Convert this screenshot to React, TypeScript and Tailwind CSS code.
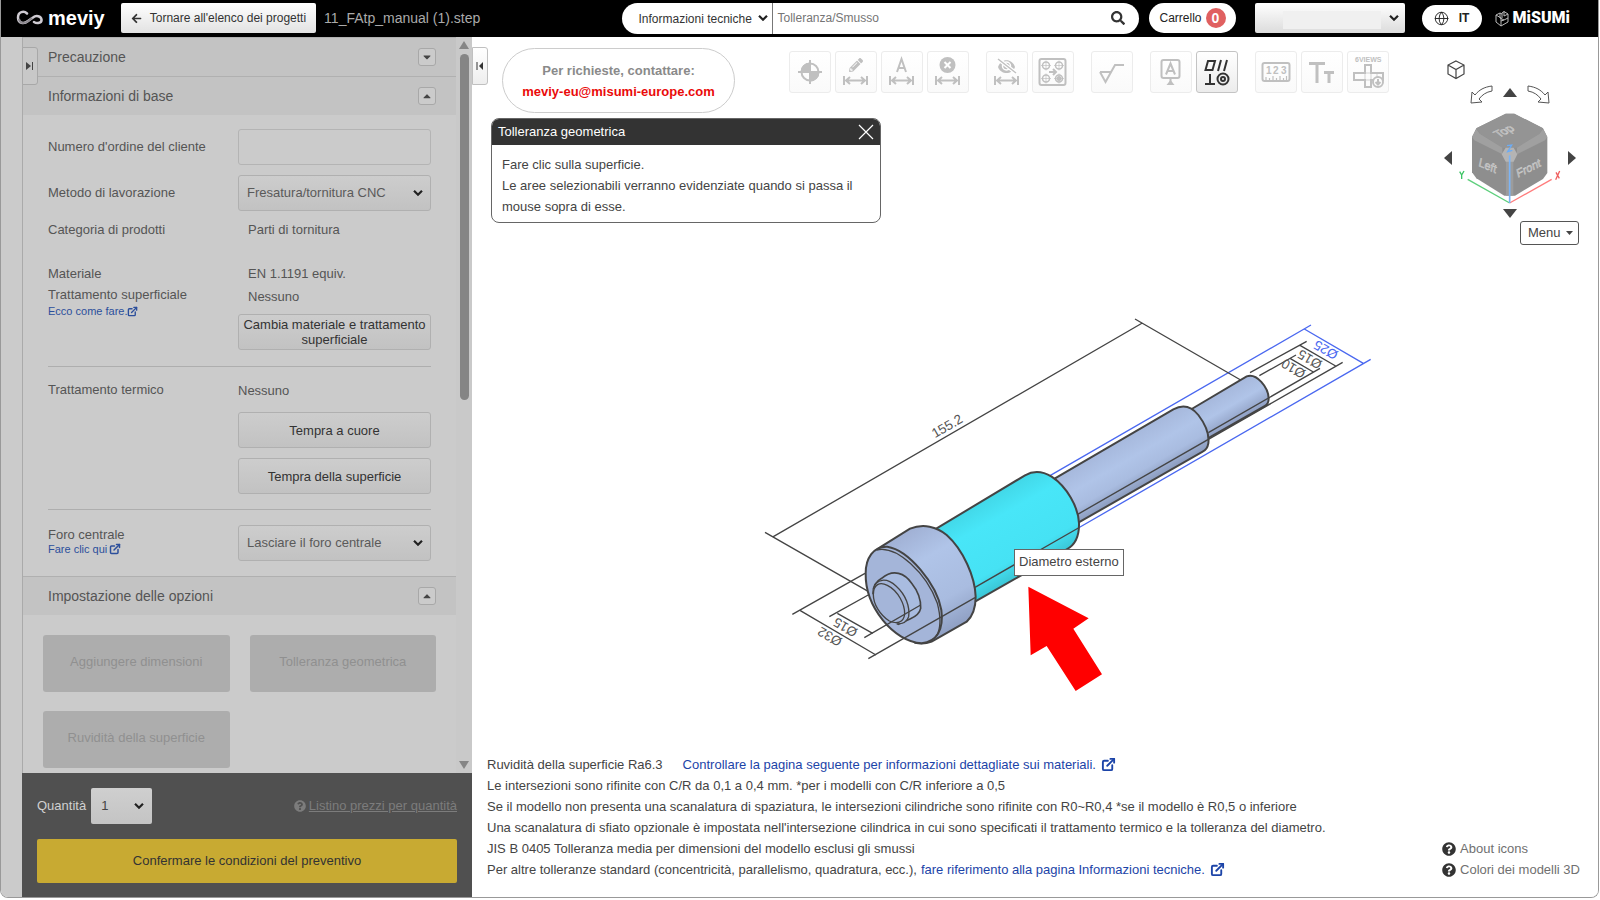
import React from "react";
import clsx from "clsx";
import { FaArrowLeft, FaSearch, FaQuestionCircle, FaCaretDown, FaCaretUp, FaPencilAlt } from "react-icons/fa";
import { Globe, ExternalLink } from "lucide-react";

const greyButton =
  "w-full h-9 rounded-[3px] border border-[#b0b0b0] bg-linear-to-b from-[#cdcdcd] to-[#c2c2c2] text-[13px] leading-[15px] text-[#333]";
const greySelect =
  "h-9 rounded-[3px] border border-[#b0b0b0] bg-linear-to-b from-[#cdcdcd] to-[#c2c2c2] pl-2 text-[13px] text-[#5a5a5a]";

type SelectProps = {
  id?: string;
  label?: string;
  value: string;
  className: string;
  wrapper?: string;
  arrow?: string;
};

const Select = ({ id, label, value, className, wrapper = "w-full", arrow = "right-2" }: SelectProps) => (
  <div className={clsx("relative", wrapper)}>
    <select id={id} aria-label={label} className={clsx("w-full appearance-none", className)}>
      <option>{value}</option>
    </select>
    <svg
      width="10"
      height="7"
      viewBox="0 0 10 7"
      fill="none"
      stroke="#222"
      strokeWidth="2.200"
      className={clsx("pointer-events-none absolute top-1/2 -translate-y-1/2", arrow)}
    >
      <path d="M1 1.200L5 5.200L9 1.200" />
    </svg>
  </div>
);

const MeviyLogo = () => (
  <a href="#" className="flex items-center gap-1 text-white" aria-label="meviy">
    <svg width="28" height="16" viewBox="0 0 28 16" fill="none">
      <path
        d="M11 3.500C8 .5 2 1.500 2 7.500C2 13.500 8 14.500 12 11L17 7.500C20 5 25 6 25.500 9.500C26 13 21 14 18 12"
        stroke="#cfcbd2"
        strokeWidth="2.500"
        strokeLinecap="round"
      />
      <path d="M3 9C4 14 9 14 13 10.500L16 8" stroke="#8d8990" strokeWidth="2" />
    </svg>
    <span className="text-xl leading-6 font-bold">meviy</span>
  </a>
);

const MisumiLogo = () => (
  <a href="#" className="flex items-center gap-1 text-white" aria-label="MiSUMi">
    <svg width="14" height="17" viewBox="0 0 14 17" fill="none" stroke="#bbb" strokeWidth="1">
      <path d="M1 5L5 3L5 8L9 10L13 8V4L9 1.500L7 3V8M1 5V12L6 16L13 12V8M1 5L6 8V16M6 11L9 10M9 1.500V6L13 4M5 3L7 4" />
    </svg>
    <span className="font-['Roboto',sans-serif] text-base leading-5 font-black">MiSUMi</span>
  </a>
);

const TopBar = () => (
  <header className="flex h-[37px] items-center bg-black pb-px pl-[15px] pr-[28px]">
    <MeviyLogo />
    <button className="ml-4 flex h-[30px] shrink-0 items-center gap-2 rounded-[2px] bg-linear-to-b from-white to-[#e2e2e2] px-[10px] text-xs text-[#333]">
      <FaArrowLeft size={11} />
      Tornare all'elenco dei progetti
    </button>
    <span className="ml-2 text-sm text-[#aaa]">11_FAtp_manual (1).step</span>

    <form className="ml-auto flex h-[31px] w-[517px] items-center rounded-full bg-white pl-4">
      <Select
        label="Categoria"
        value="Informazioni tecniche"
        wrapper="w-[134px] shrink-0"
        className="bg-white text-xs text-[#333]"
        arrow="right-1"
      />
      <input
        aria-label="Cerca"
        placeholder="Tolleranza/Smusso"
        className="h-full min-w-0 flex-1 border-l border-[#777] pl-1 text-xs text-[#333] outline-none placeholder:text-[#757575]"
      />
      <button type="button" aria-label="Cerca" className="px-[14px] text-[#333]">
        <FaSearch size={14} />
      </button>
    </form>

    <button className="ml-[10px] flex h-[30px] items-center gap-1 rounded-full bg-white px-[10px] text-xs text-[#222]">
      Carrello
      <span className="flex size-5 items-center justify-center rounded-full bg-[#e06060] text-sm font-bold text-white">0</span>
    </button>
    <div className="relative ml-[19px] h-[30px] w-[150px] rounded-[2px] bg-linear-to-b from-white to-[#dcdcdc]">
      <Select label="Account" value="" className="h-[30px]" arrow="right-[6px]" />
      <div className="pointer-events-none absolute top-2 left-7 h-[18px] w-[98px] bg-[#f0f0f0]" />
    </div>
    <button className="ml-[17px] flex h-[27px] w-[60px] items-center justify-center gap-[10px] rounded-full bg-white text-xs font-bold text-[#222]">
      <Globe size={15} strokeWidth={1.5} />
      IT
    </button>
    <div className="ml-[13px]">
      <MisumiLogo />
    </div>
  </header>
);

const SectionHeader = ({ title, open }: { title: string; open: boolean }) => (
  <div className="flex h-[39px] items-center justify-between border-t border-[#b0b0b0] bg-[#c3c3c3] pr-5 pl-[25px]">
    <h2 className="text-sm text-[#555]">{title}</h2>
    <button
      aria-label={title}
      className="flex size-[18px] items-center justify-center rounded-[3px] border border-[#a8a8a8] bg-[#cbcbcb] text-[#444]"
    >
      {open ? <FaCaretUp size={12} /> : <FaCaretDown size={12} />}
    </button>
  </div>
);

const Sidebar = () => (
  <aside className="relative flex w-[450px] shrink-0 flex-col border-l border-[#aaa] text-[13px] text-[#555]">
    <button
      aria-label="Espandi"
      className="absolute top-[10px] -left-px z-10 flex h-[38px] w-4 items-center justify-center rounded-r-[3px] border border-[#a8a8a8] bg-[#c8c8c8]"
    >
      <svg width="8" height="10" viewBox="0 0 8 10">
        <path d="M0 1L5 5L0 9Z" fill="#444" />
        <path d="M6.500 1V9" stroke="#444" />
      </svg>
    </button>

    <div className="flex flex-1">
      <div className="flex-1">
        <SectionHeader title="Precauzione" open={false} />
        <SectionHeader title="Informazioni di base" open />

        <div className="px-[25px] pt-[14px] pb-[15px]">
          <div className="grid grid-cols-[190px_1fr] items-center gap-y-[10px]">
            <label htmlFor="order">Numero d'ordine del cliente</label>
            <input id="order" className="h-9 w-full rounded-[3px] border border-[#b4b4b4] px-2" />
            <label htmlFor="method">Metodo di lavorazione</label>
            <Select id="method" className={greySelect} value="Fresatura/tornitura CNC" />
            <span className="leading-[18px]">Categoria di prodotti</span>
            <span className="pl-[10px] leading-[18px]">Parti di tornitura</span>
          </div>

          <div className="mt-[22px] grid grid-cols-[190px_1fr] border-b border-[#aeaeae] pb-4">
            <div className="pt-[2px] leading-[21px]">
              <p>Materiale</p>
              <p>Trattamento superficiale</p>
              <a href="#" className="flex items-center text-[11px] leading-3 text-[#2c4f9c]">
                Ecco come fare.
                <ExternalLink size={11} strokeWidth={3} />
              </a>
            </div>
            <div>
              <p className="pt-px pl-[10px] leading-[23px]">EN 1.1191 equiv.</p>
              <p className="mb-[6px] pl-[10px] leading-[23px]">Nessuno</p>
              <button className={greyButton}>Cambia materiale e trattamento superficiale</button>
            </div>
          </div>

          <div className="grid grid-cols-[190px_1fr] border-b border-[#aeaeae] pt-[13px] pb-[15px]">
            <p className="leading-5">Trattamento termico</p>
            <div>
              <p className="mb-[11px] pt-px leading-5">Nessuno</p>
              <button className={greyButton}>Tempra a cuore</button>
              <button className={greyButton + " mt-[10px]"}>Tempra della superficie</button>
            </div>
          </div>

          <div className="grid grid-cols-[190px_1fr] pt-[15px]">
            <div className="pt-[2px] leading-[15px]">
              <label htmlFor="hole">Foro centrale</label>
              <a href="#" className="flex items-center gap-[2px] text-[11px] leading-[14px] text-[#2c4f9c]">
                Fare clic qui
                <ExternalLink size={12} strokeWidth={3} />
              </a>
            </div>
            <Select id="hole" className={greySelect} value="Lasciare il foro centrale" />
          </div>
        </div>

        <SectionHeader title="Impostazione delle opzioni" open />
        <div className="grid grid-cols-2 gap-x-5 gap-y-[19px] px-5 pt-5 pb-[3px]">
          {["Aggiungere dimensioni", "Tolleranza geometrica", "Ruvidità della superficie"].map((name) => (
            <button key={name} disabled className="h-[57px] rounded-[3px] bg-[#adadad] pb-1 text-[#909090]">
              {name}
            </button>
          ))}
        </div>
      </div>

      {/* scrollbar */}
      <div className="flex w-4 flex-col items-center justify-between bg-[#c9c9c9] py-1">
        <div className="flex flex-col items-center gap-[5px]">
          <svg width="10" height="8" viewBox="0 0 10 8">
            <path d="M5 0L10 8H0Z" fill="#858585" />
          </svg>
          <div className="h-[346px] w-[9px] rounded-full bg-[#858585]" />
        </div>
        <svg width="10" height="8" viewBox="0 0 10 8">
          <path d="M0 0H10L5 8Z" fill="#858585" />
        </svg>
      </div>
    </div>

    <div className="-ml-px bg-[#505050] px-[15px] pt-[15px] pb-[14px]">
      <div className="flex items-center">
        <label htmlFor="qty" className="text-[#d0d0d0]">
          Quantità
        </label>
        <Select
          id="qty"
          value="1"
          wrapper="ml-[5px] w-[61px]"
          className="h-9 rounded-[2px] bg-linear-to-b from-[#cfcfcf] to-[#c4c4c4] pl-[10px] text-[13px] text-[#444]"
        />
        <a href="#" className="ml-auto flex items-center gap-[3px] text-[#7c7c7c]">
          <FaQuestionCircle size={12} />
          <span className="underline">Listino prezzi per quantità</span>
        </a>
      </div>
      <button className="mt-[15px] h-11 w-full rounded-[2px] bg-[#c8aa32] text-[#333]">
        Confermare le condizioni del preventivo
      </button>
    </div>
  </aside>
);

const DimArrow = () => <path d="M9 25V34M32 25V34M11 29.500H30M15 26L11 29.500L15 33M26 26L30 29.500L26 33" />;

const toolGroups = [
  [
    {
      name: "Origine",
      icon: (
        <>
          <circle cx="21" cy="21" r="8.500" />
          <path d="M21 9V33M9 21H33" />
          <path d="M21 21V12.500A8.500 8.500 0 0 0 12.500 21ZM21 21V29.500A8.500 8.500 0 0 0 29.500 21Z" fill="currentColor" />
        </>
      ),
    },
    {
      name: "Modifica dimensione",
      icon: (
        <>
          <DimArrow />
          <FaPencilAlt x="14" y="7" size={14} stroke="none" />
        </>
      ),
    },
    {
      name: "Testo dimensione",
      icon: (
        <>
          <DimArrow />
          <path d="M16 21L20.500 8L25 21M17.500 17H23.500" />
        </>
      ),
    },
    {
      name: "Elimina dimensione",
      icon: (
        <>
          <DimArrow />
          <circle cx="20.500" cy="14" r="8" fill="currentColor" stroke="none" />
          <path d="M17.500 11L23.500 17M23.500 11L17.500 17" stroke="#fff" />
        </>
      ),
    },
  ],
  [
    {
      name: "Nascondi dimensioni",
      icon: (
        <>
          <DimArrow />
          <path d="M12 16C15 7 26 7 29 16C26 24 15 24 12 16Z" fill="currentColor" stroke="none" />
          <circle cx="20.500" cy="15" r="4" stroke="#fff" strokeWidth="1.500" />
          <path d="M12 8L30 22" stroke="#fff" strokeWidth="4" />
          <path d="M12 8L30 22" strokeWidth="1.500" />
        </>
      ),
    },
    {
      name: "Gruppo fori",
      icon: (
        <>
          <rect x="7.500" y="8" width="26" height="26" rx="2" />
          <circle cx="14" cy="14.500" r="3.500" strokeWidth="1.500" />
          <circle cx="27" cy="14.500" r="3.500" strokeWidth="1.500" />
          <circle cx="14" cy="27.500" r="3.500" strokeWidth="1.500" />
          <circle cx="27" cy="27.500" r="3.500" strokeWidth="1.500" />
          <circle cx="27" cy="27.500" r="1.500" fill="currentColor" />
          <path d="M9 14.500H19M14 9.500V19.500M22 14.500H32M27 9.500V19.500M9 27.500H19M14 22.500V32.500M22 27.500H32M27 22.500V32.500" strokeWidth="0.700" />
          <path d="M17 21H24M21 18L24 21L21 24" />
        </>
      ),
    },
  ],
  [
    {
      name: "Rugosità",
      icon: <path d="M9 21H20L14.500 31L9 21M14.500 31L24 14H33" />,
    },
  ],
  [
    {
      name: "Riferimento",
      icon: (
        <>
          <rect x="11.500" y="9" width="18" height="18" rx="2" />
          <path d="M16 23.500L20.500 12.500L25 23.500M17.500 20H23.500M20.500 27V31" />
          <path d="M20.500 29L24.500 34H16.500Z" fill="currentColor" stroke="none" />
        </>
      ),
    },
    {
      name: "Tolleranza geometrica",
      active: true,
      icon: (
        <>
          <path d="M12 10H19L16.500 19H9.500ZM25 9L22 20M31 9L28 20M9 33H19M14 23V33" />
          <circle cx="27" cy="28" r="5.500" />
          <circle cx="27" cy="28" r="2" />
        </>
      ),
    },
  ],
  [
    {
      name: "Misura",
      icon: (
        <>
          <rect x="7.500" y="12" width="27" height="18" rx="2" />
          <g fontSize="10" fontWeight="bold" fill="currentColor" stroke="none">
            <text x="11" y="23">1</text>
            <text x="18" y="23">2</text>
            <text x="26" y="23">3</text>
          </g>
          <path d="M11 29V26M14.500 29V27M18 29V25M21.500 29V27M25 29V25M28.500 29V27M31.500 29V25" strokeWidth="1.200" />
        </>
      ),
    },
    {
      name: "Dimensione testo",
      icon: <path d="M8 12.500H24M16 12.500V32M23 21.500H33M28 21.500V32" strokeWidth="3" />,
    },
    {
      name: "6 viste",
      icon: (
        <>
          <text x="8" y="11" fontSize="7" fontWeight="bold" fill="currentColor" stroke="none">
            6VIEWS
          </text>
          <path d="M18 14H24V22H36V29H24V36H18V29H7V22H18Z" />
          <path d="M18 22H24V29H18ZM30 22V29" strokeWidth="0.700" />
          <circle cx="31" cy="31" r="5" fill="#fdfdfd" />
          <path d="M31 28V33M28.500 31L31 33.500L33.500 31" />
        </>
      ),
    },
  ],
];

const Toolbar = () => (
  <div className="flex gap-[17px] pt-[3px]">
    {toolGroups.map((group, i) => (
      <div key={i} className="flex gap-1">
        {group.map((tool: any) => (
          <button
            key={tool.name}
            aria-label={tool.name}
            className={
              tool.active
                ? "size-[42px] rounded-[3px] border border-[#c4c4c4] bg-linear-to-b from-white to-[#ececec] text-[#333]"
                : "size-[42px] rounded-[3px] border border-[#ececec] bg-linear-to-b from-white to-[#fafafa] text-[#c0c0c0]"
            }
          >
            <svg width="40" height="40" viewBox="1 1 40 40" fill="none" stroke="currentColor" strokeWidth="2">
              {tool.icon}
            </svg>
          </button>
        ))}
      </div>
    ))}
  </div>
);

const Triangle = ({ d, label }: { d: string; label: string }) => (
  <button aria-label={label}>
    <svg width="14" height="14" viewBox="0 0 14 14" fill="#444">
      <path d={d} />
    </svg>
  </button>
);

const ViewCube = () => (
  <div className="flex w-[138px] flex-col">
    <button aria-label="Isometrica" className="mb-[5px] ml-[6px] self-start">
      <svg width="18" height="20" viewBox="0 0 18 20" fill="none" stroke="#444" strokeWidth="1.200">
        <path d="M9 1L17 5V14L9 18.500L1 14V5ZM1 5L9 9.500L17 5M9 9.500V18.500" />
      </svg>
    </button>
    <div className="flex items-start justify-center gap-[9px]">
      <button aria-label="Ruota a sinistra">
        <svg width="24" height="20" viewBox="0 0 24 20" fill="none" stroke="#555">
          <path d="M22 1C14 2 9 5 5 10L2 7L1 18L12 17L9 14C12 10 16 7 22 6Z" />
        </svg>
      </button>
      <Triangle label="Su" d="M7 3L14 12H0Z" />
      <button aria-label="Ruota a destra">
        <svg width="24" height="20" viewBox="0 0 24 20" fill="none" stroke="#555">
          <path d="M2 1C10 2 15 5 19 10L22 7L23 18L12 17L15 14C12 10 8 7 2 6Z" />
        </svg>
      </button>
    </div>
    <div className="flex items-center justify-between pt-1">
      <Triangle label="Sinistra" d="M3 7L11 0V14Z" />
      {/* cube body and axes, three units per pixel */}
      <svg width="106" height="98" viewBox="166 206 318 294">
        <path d="M312 220H338L424 264L437 290V398L424 416L340 466H308L224 414L211 396V290L224 264Z" fill="#8e8e8e" />
        <path d="M312 220H338L424 264L414 280L346 322H302L234 280L224 264Z" fill="#949494" />
        <path d="M224 266L234 280L302 322V342L218 300L211 290ZM424 266L414 280L346 322V342L430 300L437 290Z" fill="#a0a0a0" />
        <path d="M313 362H335V466H313Z" fill="#9c9c9c" />
        <path d="M312 322H336L347 342L336 364H312L300 342Z" fill="#b4b4b4" />
        <g fill="#a8a8a8" stroke="#d0d0d0" strokeWidth="1.500" fontSize="34">
          <text transform="translate(292 292) rotate(-26) skewX(25)">Top</text>
          <text transform="translate(230 376) rotate(24) skewX(12)">Left</text>
          <text transform="translate(348 412) rotate(-26) skewX(-12)">Front</text>
        </g>
        <path d="M324 488L198 417" stroke="#5dcf7c" strokeWidth="4" />
        <path d="M324 488L450 417" stroke="#ff7c7c" strokeWidth="4" />
        <path d="M324 488V345" stroke="#7cb4f5" strokeWidth="5" />
        <path d="M316 316L330 314L318 334L332 330" fill="none" stroke="#6cacf5" strokeWidth="4" />
        <path d="M174 394L180 404L187 392M180 404V416" fill="none" stroke="#3cc464" strokeWidth="4" />
        <path d="M463 396L473 414M474 392L462 418" fill="none" stroke="#f06060" strokeWidth="4" />
      </svg>
      <Triangle label="Destra" d="M11 7L3 0V14Z" />
    </div>
    <div className="flex justify-center">
      <Triangle label="Giù" d="M0 2H14L7 11Z" />
    </div>
  </div>
);

// shaft model, three units per pixel
const ShaftModel = () => (
  <svg width="630" height="400" viewBox="0 0 1890 1200" fill="none" stroke="#444" strokeWidth="4" className="max-w-none">
    <defs>
      <linearGradient id="head" gradientUnits="userSpaceOnUse" x1="450" y1="700" x2="620" y2="995">
        <stop offset="0" stopColor="#a0b0d4" />
        <stop offset="0.300" stopColor="#b0c4e8" />
        <stop offset="0.700" stopColor="#a9bce0" />
        <stop offset="1" stopColor="#8c9cc0" />
      </linearGradient>
      <linearGradient id="cyan" gradientUnits="userSpaceOnUse" x1="690" y1="607" x2="820" y2="835">
        <stop offset="0" stopColor="#42d8e8" />
        <stop offset="0.250" stopColor="#48e6f8" />
        <stop offset="0.750" stopColor="#46e2f4" />
        <stop offset="1" stopColor="#38c0d0" />
      </linearGradient>
      <linearGradient id="mid" gradientUnits="userSpaceOnUse" x1="1092" y1="430" x2="1172" y2="568">
        <stop offset="0" stopColor="#a6b8dc" />
        <stop offset="0.400" stopColor="#b0c4e8" />
        <stop offset="0.700" stopColor="#a9bce0" />
        <stop offset="1" stopColor="#8696b8" />
      </linearGradient>
      <linearGradient id="tip" gradientUnits="userSpaceOnUse" x1="1410" y1="276" x2="1462" y2="366">
        <stop offset="0" stopColor="#a6b8dc" />
        <stop offset="0.500" stopColor="#b0c4e8" />
        <stop offset="1" stopColor="#8e9ec2" />
      </linearGradient>
    </defs>

    <path d="M900 527L1683 75M985 684L1862 178M1663 87L1840 190" stroke="#4a68f0" />
    <path d="M70 710L1177 69M45 697L365 880M1155 57L1472 240" />
    <path d="M345 820L127 943M151 932L378 1065M238 950L360 882M262 940L368 1000" />
    <path d="M1500 218L1670 124M1650 136L1757 198M1528 227L1638 165M1620 175L1690 216" />

    <path d="M1325 327L1490 229C1520 218 1555 262 1556 295Q1556 312 1545 318L1375 414Z" fill="url(#tip)" strokeWidth="6" />
    <path
      d="M915 535L1270 328C1300 312 1325 320 1345 345C1368 375 1378 405 1375 430Q1372 448 1358 455L985 668Z"
      fill="url(#mid)"
      strokeWidth="6"
    />
    <path
      d="M555 688L825 526C850 512 880 515 905 530C950 560 985 620 987 670C988 710 975 735 950 748L675 905Z"
      fill="url(#cyan)"
      strokeWidth="6"
    />
    <path
      d="M352 790Q362 762 390 742L480 686C520 670 560 680 590 705C640 750 675 830 677 890Q677 940 650 965L545 1025Q520 1034 495 1028Z"
      fill="url(#head)"
      strokeWidth="6"
    />
    <path
      d="M347 820C347 775 370 738 412 740C475 750 560 850 574 930C582 990 560 1025 515 1030C430 1025 345 920 347 820Z"
      fill="#a4b5d9"
      strokeWidth="6"
    />
    <path d="M380 750C440 735 530 820 562 910C574 955 572 985 560 1008" />
    <path
      d="M369 880Q368 850 395 835C430 805 465 820 485 850C505 875 513 900 512 925Q508 945 480 957L445 973Z"
      fill="#a9bce0"
      strokeWidth="5"
    />
    <path d="M370 868C378 835 410 832 438 858C468 885 480 920 476 950Q470 972 440 972" fill="#a4b5d9" />
    <path
      d="M370 884C370 852 390 845 412 856C445 872 465 915 464 942C461 970 438 972 418 963C390 945 370 912 370 884Z"
      fill="#a4b5d9"
    />
    <path d="M343 1013L512 915M355 1076L675 893M675 862L985 684M983 643L1778 187M1375 398L1710 205" />

    <g fill="#555" stroke="none" fontSize="40" textAnchor="middle">
      <text transform="translate(598 390) rotate(-30)">155.2</text>
      <text transform="translate(293 970) rotate(210)">Ø15</text>
      <text transform="translate(246 998) rotate(210)">Ø32</text>
      <text transform="translate(1734 138) rotate(210)" fill="#4a68f0">Ø25</text>
      <text transform="translate(1686 166) rotate(210)">Ø15</text>
      <text transform="translate(1637 194) rotate(210)">Ø10</text>
    </g>
    <path d="M835 860L1016 955L970 986L1056 1123L977 1173L890 1038L842 1066Z" fill="#f00" stroke="none" />
  </svg>
);

const Notes = () => (
  <div className="flex items-end justify-between pr-[18px] pb-[17px] pl-[15px] text-[13px] leading-[21px] text-[#444]">
    <div>
      <p className="flex items-center gap-5">
        Ruvidità della superficie Ra6.3
        <a href="#" className="flex items-center gap-[5px] text-[#1c44a8]">
          Controllare la pagina seguente per informazioni dettagliate sui materiali.
          <ExternalLink size={15} strokeWidth={3} />
        </a>
      </p>
      <p>Le intersezioni sono rifinite con C/R da 0,1 a 0,4 mm. *per i modelli con C/R inferiore a 0,5</p>
      <p>
        Se il modello non presenta una scanalatura di spaziatura, le intersezioni cilindriche sono rifinite con R0~R0,4 *se il
        modello è R0,5 o inferiore
      </p>
      <p>
        Una scanalatura di sfiato opzionale è impostata nell'intersezione cilindrica in cui sono specificati il trattamento
        termico e la tolleranza del diametro.
      </p>
      <p>JIS B 0405 Tolleranza media per dimensioni del modello esclusi gli smussi</p>
      <p className="flex items-center gap-1">
        Per altre tolleranze standard (concentricità, parallelismo, quadratura, ecc.),
        <a href="#" className="flex items-center gap-[5px] text-[#1c44a8]">
          fare riferimento alla pagina Informazioni tecniche.
          <ExternalLink size={15} strokeWidth={3} />
        </a>
      </p>
    </div>
    <div className="text-[#707070]">
      {["About icons", "Colori dei modelli 3D"].map((label) => (
        <a key={label} href="#" className="flex items-center gap-1">
          <FaQuestionCircle size={14} className="text-[#333]" />
          {label}
        </a>
      ))}
    </div>
  </div>
);

const Viewer = () => (
  <main className="relative flex min-w-0 flex-1 flex-col bg-white">
    <button
      aria-label="Comprimi"
      className="absolute top-[10px] left-0 flex h-[38px] w-4 items-center justify-center rounded-r-[3px] border border-[#c0c0c0] bg-linear-to-b from-white to-[#eee]"
    >
      <svg width="8" height="10" viewBox="0 0 8 10">
        <path d="M7 1L3 5L7 9Z" fill="#333" />
        <path d="M1 1V9" stroke="#333" />
      </svg>
    </button>

    <div className="flex justify-between pt-[11px] pr-[19px] pl-[19px]">
      <div>
        <div className="flex gap-[54px]">
          <div className="ml-[11px] flex h-[65px] w-[233px] flex-col items-center justify-center rounded-full border border-[#ccc] text-[13px] leading-[21px] font-bold">
            <span className="text-[#8a8a8a]">Per richieste, contattare:</span>
            <a href="#" className="text-[#ea0a0a]">
              meviy-eu@misumi-europe.com
            </a>
          </div>
          <Toolbar />
        </div>

        <section className="mt-[5px] w-[390px] overflow-hidden rounded-lg border border-[#666] bg-white text-[13px] text-[#444]">
          <div className="flex h-[26px] items-center justify-between bg-[#333] px-[6px] text-white">
            <h3>Tolleranza geometrica</h3>
            <button aria-label="Chiudi">
              <svg width="16" height="16" viewBox="0 0 16 16" stroke="#fff" strokeWidth="1.200">
                <path d="M1 1L15 15M15 1L1 15" />
              </svg>
            </button>
          </div>
          <p className="px-[10px] pt-[9px] pb-[5px] leading-[21px]">
            Fare clic sulla superficie.
            <br />
            Le aree selezionabili verranno evidenziate quando si passa il mouse sopra di esse.
          </p>
        </section>
      </div>

      <div className="flex flex-col items-end pt-3">
        <ViewCube />
        <button className="flex h-6 w-[59px] items-center justify-between rounded-[3px] border border-[#555] pr-[5px] pl-[7px] text-[13px] text-[#444]">
          Menu
          <svg width="7" height="4" viewBox="0 0 7 4" fill="#444">
            <path d="M0 0H7L3.500 4Z" />
          </svg>
        </button>
      </div>
    </div>

    <div className="flex flex-1 items-center justify-center pl-[60px]">
      <div className="relative">
        <ShaftModel />
        <div role="tooltip" className="absolute top-[249px] left-[264px] border border-[#666] bg-white px-1 pb-px text-[13px] leading-6 whitespace-nowrap text-[#444]">
          Diametro esterno
        </div>
      </div>
    </div>

    <Notes />
  </main>
);

const App = () => {
  return (
    <div className="flex min-h-screen flex-col bg-white pr-px pb-[2px] font-['Liberation_Sans',Arial,sans-serif]">
      <div className="flex flex-1 flex-col overflow-hidden rounded-b-lg border-x border-b border-[#999]">
        <TopBar />
        <div className="flex flex-1 bg-[#cbcbcb]">
          <div className="w-[21px] shrink-0" />
          <Sidebar />
          <Viewer />
        </div>
      </div>
    </div>
  );
};

export default App;
